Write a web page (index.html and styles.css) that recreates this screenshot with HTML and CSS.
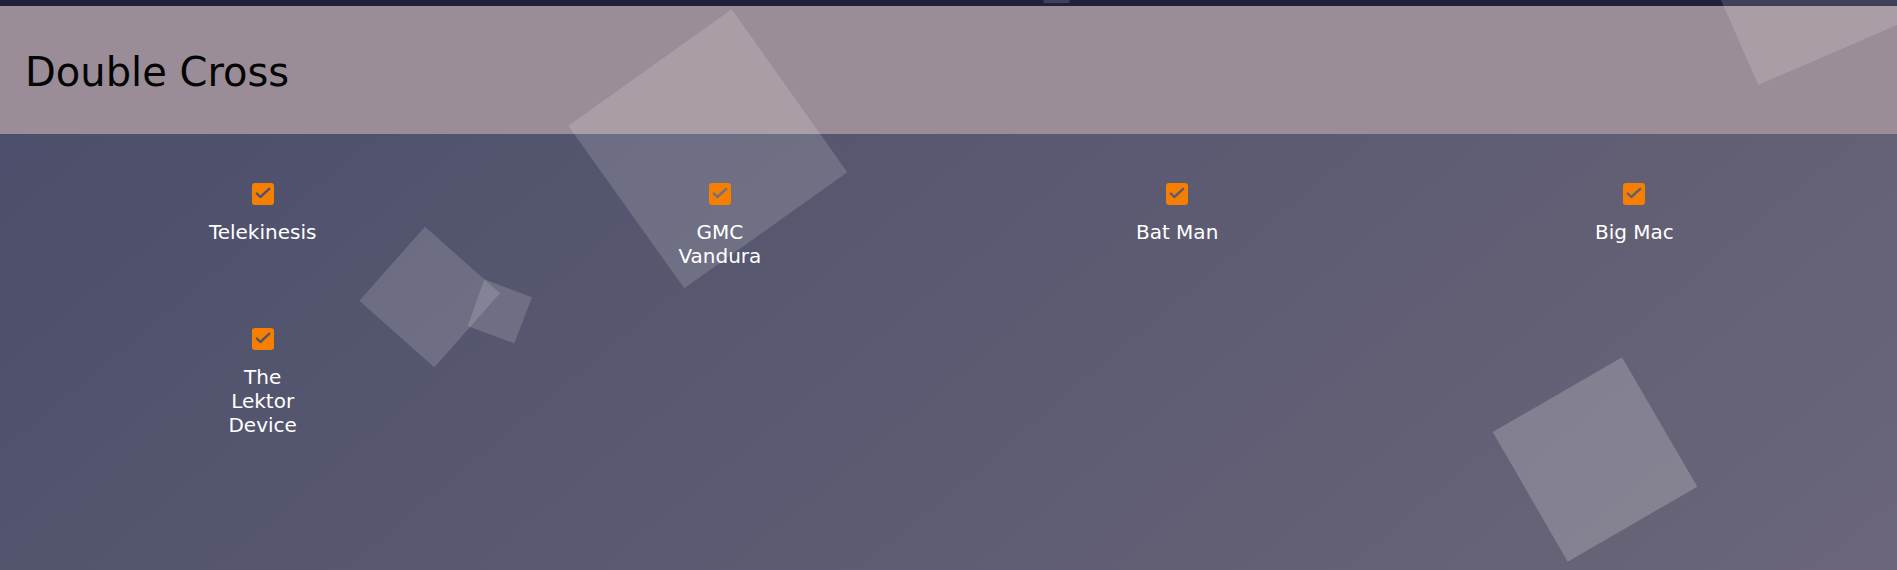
FILE: index.html
```html
<!DOCTYPE html>
<html lang="en">
<head>
<meta charset="utf-8">
<title>Double Cross</title>
<link rel="stylesheet" href="styles.css">
</head>
<body>
<div class="page">
  <div class="topbar"></div>
  <header class="header">
    <h1 class="title">Double Cross</h1>
  </header>
  <main class="grid">
    <div class="item">
      <svg class="check" width="22" height="22" viewBox="0 0 22 22"><defs><mask id="m1"><rect width="22" height="22" fill="#fff"/><path d="M4.8 10.5 L8.3 14 L17.2 5.8" fill="none" stroke="#000" stroke-width="2.4" stroke-linecap="round" stroke-linejoin="round"/></mask></defs><rect class="box" width="22" height="22" rx="3" mask="url(#m1)"/></svg>
      <div class="label">Telekinesis</div>
    </div>
    <div class="item">
      <svg class="check" width="22" height="22" viewBox="0 0 22 22"><defs><mask id="m2"><rect width="22" height="22" fill="#fff"/><path d="M4.8 10.5 L8.3 14 L17.2 5.8" fill="none" stroke="#000" stroke-width="2.4" stroke-linecap="round" stroke-linejoin="round"/></mask></defs><rect class="box" width="22" height="22" rx="3" mask="url(#m2)"/></svg>
      <div class="label">GMC Vandura</div>
    </div>
    <div class="item">
      <svg class="check" width="22" height="22" viewBox="0 0 22 22"><defs><mask id="m3"><rect width="22" height="22" fill="#fff"/><path d="M4.8 10.5 L8.3 14 L17.2 5.8" fill="none" stroke="#000" stroke-width="2.4" stroke-linecap="round" stroke-linejoin="round"/></mask></defs><rect class="box" width="22" height="22" rx="3" mask="url(#m3)"/></svg>
      <div class="label">Bat Man</div>
    </div>
    <div class="item">
      <svg class="check" width="22" height="22" viewBox="0 0 22 22"><defs><mask id="m4"><rect width="22" height="22" fill="#fff"/><path d="M4.8 10.5 L8.3 14 L17.2 5.8" fill="none" stroke="#000" stroke-width="2.4" stroke-linecap="round" stroke-linejoin="round"/></mask></defs><rect class="box" width="22" height="22" rx="3" mask="url(#m4)"/></svg>
      <div class="label">Big Mac</div>
    </div>
    <div class="item">
      <svg class="check" width="22" height="22" viewBox="0 0 22 22"><defs><mask id="m5"><rect width="22" height="22" fill="#fff"/><path d="M4.8 10.5 L8.3 14 L17.2 5.8" fill="none" stroke="#000" stroke-width="2.4" stroke-linecap="round" stroke-linejoin="round"/></mask></defs><rect class="box" width="22" height="22" rx="3" mask="url(#m5)"/></svg>
      <div class="label">The Lektor Device</div>
    </div>
  </main>
  <svg class="shapes" aria-hidden="true">
    <polygon class="sq" points="731.7,9.3 847.3,172.3 684.3,288.3 568.3,125.7"/>
    <polygon class="sq" points="425,226.7 500,293.3 434.3,367.3 359.3,300.7"/>
    <polygon class="sq" points="484.3,279.3 532,297.3 514.3,343.3 467.7,326.3"/>
    <polygon class="sq sq-strong" points="1622,357.3 1697.3,486.7 1567.7,561.7 1492.7,432"/>
    <polygon class="sq" points="1758.3,85 1941.9,5.6 1861.5,-177.6 1677.9,-98.2"/>
    <polygon class="sq" points="1043.5,3.3 1069.5,3 1072,-25 1045,-25"/>
  </svg>
</div>
</body>
</html>
```

FILE: styles.css
```css
html, body {
  margin: 0;
  padding: 0;
}

body {
  min-height: 100vh;
  background: linear-gradient(140deg, #4a4d6a 0%, #6b6679 100%);
  font-family: "DejaVu Sans", Verdana, sans-serif;
  overflow: hidden;
}

.page {
  position: relative;
  min-height: 100vh;
}

.topbar {
  height: 6px;
  background: #201f3c;
}

.header {
  height: 128px;
  box-sizing: border-box;
  padding: 43px 0 0 25px;
  background: #9a8d97;
}

.title {
  position: relative;
  z-index: 1;
  margin: 0;
  font-size: 40px;
  font-weight: normal;
  line-height: 47px;
  color: #050505;
}

.grid {
  position: relative;
  z-index: 1;
  display: grid;
  grid-template-columns: repeat(4, 1fr);
  row-gap: 60px;
  padding: 49px 34px 0;
}

.item {
  display: flex;
  flex-direction: column;
  align-items: center;
}

.check {
  display: block;
}

.box {
  fill: #f77f00;
}

.label {
  margin-top: 15px;
  max-width: 100px;
  min-width: min-content;
  text-align: center;
  font-size: 20px;
  line-height: 24px;
  color: #ffffff;
}

.shapes {
  position: absolute;
  top: 0;
  left: 0;
  width: 100%;
  height: 100%;
  pointer-events: none;
}

.sq {
  fill: rgba(255, 255, 255, 0.15);
}

.sq-strong {
  fill: rgba(255, 255, 255, 0.2);
}
```
